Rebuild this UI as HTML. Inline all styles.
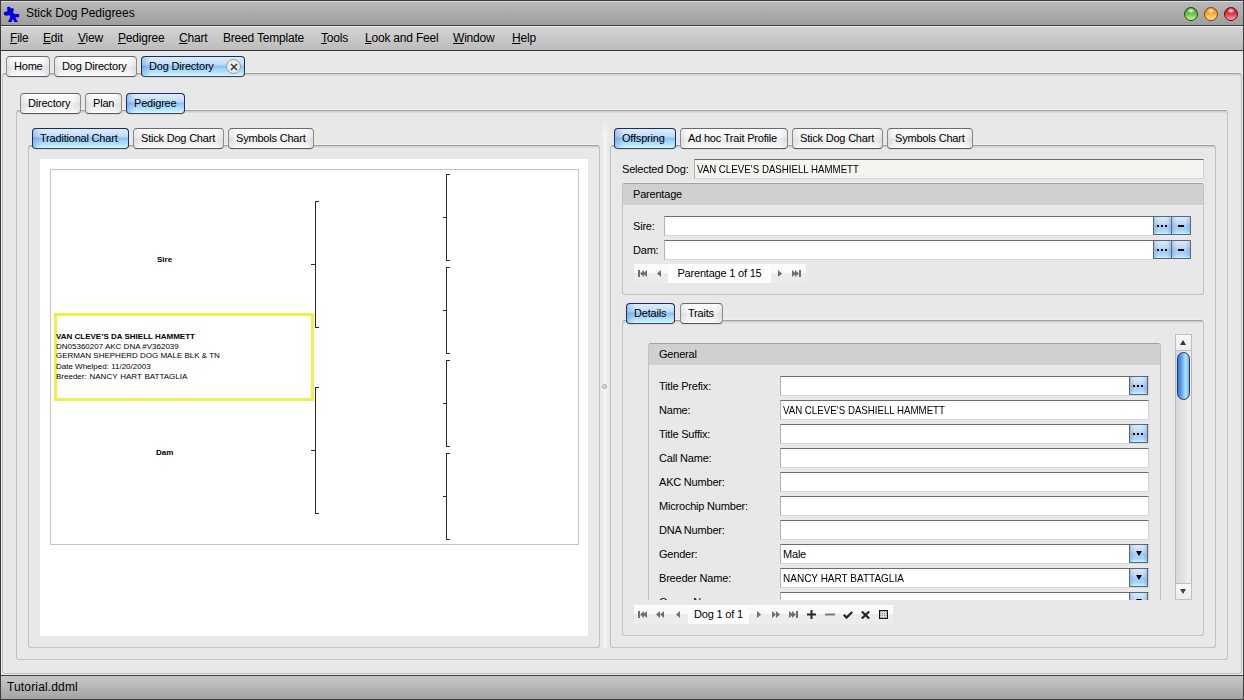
<!DOCTYPE html>
<html><head><meta charset="utf-8">
<style>
*{box-sizing:border-box;margin:0;padding:0}
html,body{width:1244px;height:700px;overflow:hidden;background:#e8e8e8;font-family:"Liberation Sans",sans-serif;color:#000;letter-spacing:-0.2px}
.a{position:absolute}
#win{position:absolute;left:0;top:0;width:1244px;height:700px;border:1px solid #3c3c3c;background:#e8e8e8}
#title{left:0;top:0;width:1244px;height:26px;border-top:1px solid #3a3a3a;border-bottom:1px solid #3e3e3e;background:linear-gradient(#dcdcdc 0,#dcdcdc 1px,#b8b8b8 1px,#9e9e9e 100%)}
#menu{left:0;top:26px;width:1244px;height:25px;border-bottom:1px solid #3a3a3a;background:linear-gradient(#ececec 0,#ececec 1px,#d4d4d4 1px,#bcbcbc 100%)}
.mi{position:absolute;top:5px;font-size:12px;line-height:14px;color:#000}
.mi u{text-decoration:underline;text-underline-offset:1px;text-decoration-thickness:1px}
.tab{position:absolute;height:21px;border:1px solid #8a8a8a;border-top-color:#6a6a6a;border-bottom-color:#5a5a5a;border-radius:4px;background:linear-gradient(90deg,rgba(0,0,0,.07) 0,rgba(0,0,0,0) 7px,rgba(0,0,0,0) calc(100% - 7px),rgba(0,0,0,.07) 100%),linear-gradient(#fdfdfd 0,#f6f6f6 40%,#ebebeb 55%,#f4f4f4 85%,#fcfcfc 100%);font-size:11px;line-height:19px;color:#000;box-shadow:0 1px 0 rgba(0,0,0,0.06)}
.tab.sel{border-color:#1e2c5c;border-bottom-color:#3a4458;background:linear-gradient(90deg,rgba(40,110,210,.28) 0,rgba(40,110,210,0) 9px),linear-gradient(#dcedfc 0,#c2defa 38%,#8cc2f2 50%,#9cd0f8 60%,#c0ecfc 90%,#d8f8ff 100%)}
.pnl{position:absolute;border:1px solid #c2c2c2;border-top-color:#a0a0a0;border-radius:3px;box-shadow:inset 0 1px 0 #cfcfcf,inset 0 2px 0 #dcdcdc,0 -1px 0 #f0f0f0}
.lbl{position:absolute;font-size:11px;line-height:13px;color:#000}
.fld{position:absolute;height:20px;background:#fff;border-top:1px solid #6c6c6c;border-left:1px solid #b4b4b4;border-right:1px solid #d0d0d0;border-bottom:1px solid #d8d8d8;font-size:11px;line-height:18px;padding-left:2px;color:#000}
.btn{position:absolute;border:1px solid #5c6878;background:linear-gradient(90deg,rgba(60,110,190,.25),transparent 25%,transparent 75%,rgba(60,110,190,.25)),linear-gradient(#dceafa 0,#c4dcf6 35%,#a4ccf2 55%,#a8d8f6 80%,#c8f0ff 100%)}
.uc{display:inline-block;letter-spacing:0;transform:scaleX(.88);transform-origin:0 0}.uc2{display:inline-block;letter-spacing:0;transform:scaleX(.91);transform-origin:0 0}
.hdr{position:absolute;height:22px;background:#d0d0d0;border-bottom:1px solid #ececec;border-radius:3px 3px 0 0;font-size:11px;line-height:20px;padding-left:10px;color:#000}

.dots{position:absolute;left:3px;top:8px;width:10px;height:2px;background:linear-gradient(90deg,#000 0,#000 2px,transparent 2px,transparent 4px,#000 4px,#000 6px,transparent 6px,transparent 8px,#000 8px,#000 10px)}
.dash{position:absolute;left:6px;top:8px;width:6px;height:2px;background:#000}
.tri{position:absolute;left:6px;top:6px;border-left:3px solid transparent;border-right:3px solid transparent;border-top:5px solid #000}
.nav{position:absolute;height:19px;background:linear-gradient(#fcfcfc 0,#fafafa 45%,#ececec 50%,#ececec 100%)}
.navtxt{position:absolute;top:0;height:19px;background:#fff;font-size:11px;line-height:19px;text-align:center;color:#000}
.sb{position:absolute;border:1px solid #b8b8b8;background:linear-gradient(90deg,#d8d8d8,#f0f0f0)}
.sbb{position:absolute;border:1px solid #c0c0c0;background:linear-gradient(#f8f8f8,#ececec)}
.tup{position:absolute;left:4px;top:5px;border-left:3.5px solid transparent;border-right:3.5px solid transparent;border-bottom:5px solid #333}
.tdn{position:absolute;left:4px;top:5px;border-left:3.5px solid transparent;border-right:3.5px solid transparent;border-top:5px solid #444}
.thumb{position:absolute;border:1px solid #1e3c78;border-radius:7px;background:linear-gradient(90deg,#3474cc 0,#68a8ee 35%,#b4e4fe 70%,#70b0ec 100%)}

.bk{position:absolute;background:#2a2a2a}
.ct{position:absolute;font-size:8px;line-height:10px;white-space:pre;color:#000;letter-spacing:0;word-spacing:0}
.ct.b{font-weight:bold}
</style></head><body>
<div id="win">
</div>
<div id="title" class="a">
  <svg class="a" style="left:0;top:0" width="24" height="24" viewBox="0 0 24 24">
    <path d="M7 6.2 L9.8 5.6 L10.8 7.4 L12 7 L14 8 L13.6 10 L12.8 11.3 L14.6 13 L19.1 13 L19.1 16.3 L15.3 16.4 L18 20.9 L14.5 20.9 L12.8 18 L11.5 20.9 L8 20.9 L10.2 16.2 L9.8 14.2 L6 14.8 L3.9 13.8 L3.9 11.3 L7.4 10.3 L7.3 8.5 Z" fill="#0000e6"/>
  </svg>
  <div class="a" style="left:26px;top:5px;font-size:12px;line-height:15px;color:#000;letter-spacing:0">Stick Dog Pedigrees</div>
  <div class="a" style="left:1184px;top:6px;width:14px;height:14px;border-radius:50%;border:1px solid #1c4a12;background:radial-gradient(ellipse 4px 3px at 50% 22%,rgba(255,255,255,.95),rgba(255,255,255,0) 100%),linear-gradient(#3e9424,#6cc444 50%,#c4f4a0)"></div>
  <div class="a" style="left:1204px;top:6px;width:14px;height:14px;border-radius:50%;border:1px solid #8a4008;background:radial-gradient(ellipse 4px 3px at 50% 22%,rgba(255,255,255,.95),rgba(255,255,255,0) 100%),linear-gradient(#e07a10,#f8b030 50%,#ffe890)"></div>
  <div class="a" style="left:1224px;top:6px;width:14px;height:14px;border-radius:50%;border:1px solid #6a0810;background:radial-gradient(ellipse 4px 3px at 50% 22%,rgba(255,255,255,.95),rgba(255,255,255,0) 100%),linear-gradient(#b81020,#e03848 50%,#ffa8b0)"></div>
</div>
<div id="menu" class="a">
  <div class="mi" style="left:10px"><u>F</u>ile</div>
  <div class="mi" style="left:43px"><u>E</u>dit</div>
  <div class="mi" style="left:78px"><u>V</u>iew</div>
  <div class="mi" style="left:118px"><u>P</u>edigree</div>
  <div class="mi" style="left:179px"><u>C</u>hart</div>
  <div class="mi" style="left:223px">Breed Template</div>
  <div class="mi" style="left:321px"><u>T</u>ools</div>
  <div class="mi" style="left:365px"><u>L</u>ook and Feel</div>
  <div class="mi" style="left:453px"><u>W</u>indow</div>
  <div class="mi" style="left:512px"><u>H</u>elp</div>
</div>

<!-- panel 1 -->
<div class="pnl" style="left:2px;top:73px;width:1240px;height:601px"></div>
<div class="tab" style="left:6px;top:56px;width:44px;padding-left:7px">Home</div>
<div class="tab" style="left:54px;top:56px;width:83px;padding-left:7px">Dog Directory</div>
<div class="tab sel" style="left:141px;top:56px;width:104px;padding-left:7px">Dog Directory</div>
<div class="a" style="left:226px;top:59px;width:15px;height:15px;border-radius:50%;border:1px solid #9a9a9a;background:radial-gradient(circle at 50% 40%,#f6f6f6,#e0e0e0)"><svg class="a" style="left:3px;top:3px" width="8" height="8" viewBox="0 0 8 8"><path d="M1 1L7 7M7 1L1 7" stroke="#404040" stroke-width="1.7"/></svg></div>

<!-- panel 2 -->
<div class="pnl" style="left:16px;top:110px;width:1212px;height:550px"></div>
<div class="tab" style="left:20px;top:93px;width:61px;padding-left:7px">Directory</div>
<div class="tab" style="left:85px;top:93px;width:37px;padding-left:7px">Plan</div>
<div class="tab sel" style="left:126px;top:93px;width:59px;padding-left:7px">Pedigree</div>

<!-- left chart panel -->
<div class="pnl" style="left:28px;top:145px;width:572px;height:503px"></div>
<div class="tab sel" style="left:32px;top:128px;width:97px;padding-left:7px">Traditional Chart</div>
<div class="tab" style="left:133px;top:128px;width:91px;padding-left:7px">Stick Dog Chart</div>
<div class="tab" style="left:228px;top:128px;width:86px;padding-left:7px">Symbols Chart</div>
<div class="a" style="left:40px;top:159px;width:548px;height:477px;background:#fff"></div>
<div class="a" style="left:50px;top:169px;width:529px;height:376px;border:1px solid #c4c4c4"></div>

<div class="bk" style="left:315px;top:201px;width:1px;height:127px"></div>
<div class="bk" style="left:315px;top:201px;width:4px;height:1px"></div>
<div class="bk" style="left:315px;top:327px;width:4px;height:1px"></div>
<div class="bk" style="left:311px;top:264px;width:4px;height:1px"></div>
<div class="bk" style="left:315px;top:387px;width:1px;height:127px"></div>
<div class="bk" style="left:315px;top:387px;width:4px;height:1px"></div>
<div class="bk" style="left:315px;top:513px;width:4px;height:1px"></div>
<div class="bk" style="left:311px;top:450px;width:4px;height:1px"></div>
<div class="bk" style="left:446px;top:174px;width:1px;height:87px"></div>
<div class="bk" style="left:446px;top:174px;width:4px;height:1px"></div>
<div class="bk" style="left:446px;top:260px;width:4px;height:1px"></div>
<div class="bk" style="left:443px;top:217px;width:3px;height:1px"></div>
<div class="bk" style="left:446px;top:267px;width:1px;height:87px"></div>
<div class="bk" style="left:446px;top:267px;width:4px;height:1px"></div>
<div class="bk" style="left:446px;top:353px;width:4px;height:1px"></div>
<div class="bk" style="left:443px;top:310px;width:3px;height:1px"></div>
<div class="bk" style="left:446px;top:360px;width:1px;height:87px"></div>
<div class="bk" style="left:446px;top:360px;width:4px;height:1px"></div>
<div class="bk" style="left:446px;top:446px;width:4px;height:1px"></div>
<div class="bk" style="left:443px;top:403px;width:3px;height:1px"></div>
<div class="bk" style="left:446px;top:453px;width:1px;height:87px"></div>
<div class="bk" style="left:446px;top:453px;width:4px;height:1px"></div>
<div class="bk" style="left:446px;top:539px;width:4px;height:1px"></div>
<div class="bk" style="left:443px;top:496px;width:3px;height:1px"></div>
<div class="ct b" style="left:157px;top:255px">Sire</div>
<div class="ct b" style="left:156px;top:448px">Dam</div>
<div class="a" style="left:54px;top:313px;width:260px;height:88px;border:3px solid #f0f048"></div>
<div class="ct b" style="left:56px;top:332px">VAN CLEVE’S DA SHIELL HAMMETT</div>
<div class="ct" style="left:56px;top:342px">DN05360207 AKC DNA #V362039</div>
<div class="ct" style="left:56px;top:351px">GERMAN SHEPHERD DOG MALE BLK &amp; TN</div>
<div class="ct" style="left:56px;top:362px">Date Whelped: 11/20/2003</div>
<div class="ct" style="left:56px;top:372px;word-spacing:0.6px">Breeder: NANCY HART BATTAGLIA</div>
<div class="a" style="left:600px;top:120px;width:10px;height:528px;background:linear-gradient(90deg,#e8e8e8 10%,#f6f6f6 50%,#e8e8e8 90%);-webkit-mask-image:linear-gradient(transparent 0,#000 14px)"></div>
<div class="a" style="left:602px;top:384px;width:5px;height:5px;border-radius:50%;border:1px solid #a8a8a8;background:#d8d8d8"></div>
<!-- right panel -->
<div class="pnl" style="left:610px;top:145px;width:606px;height:503px"></div>
<div class="tab sel" style="left:614px;top:128px;width:62px;padding-left:7px">Offspring</div>
<div class="tab" style="left:680px;top:128px;width:108px;padding-left:7px">Ad hoc Trait Profile</div>
<div class="tab" style="left:792px;top:128px;width:91px;padding-left:7px">Stick Dog Chart</div>
<div class="tab" style="left:887px;top:128px;width:86px;padding-left:7px">Symbols Chart</div>


<!-- right content -->
<div class="lbl" style="left:622px;top:163px">Selected Dog:</div>
<div class="fld" style="left:694px;top:159px;width:510px;background:#f5f4f0"><span class="uc">VAN CLEVE’S DASHIELL HAMMETT</span></div>
<div class="pnl" style="left:622px;top:183px;width:582px;height:112px"><div class="hdr" style="left:0;top:0;width:580px">Parentage</div></div>
<div class="lbl" style="left:633px;top:220px">Sire:</div>
<div class="fld" style="left:664px;top:216px;width:490px"></div>
<div class="btn" style="left:1153px;top:216px;width:19px;height:19px"><div class="dots"></div></div>
<div class="btn" style="left:1171px;top:216px;width:20px;height:19px"><div class="dash"></div></div>
<div class="lbl" style="left:633px;top:244px">Dam:</div>
<div class="fld" style="left:664px;top:240px;width:490px"></div>
<div class="btn" style="left:1153px;top:240px;width:19px;height:19px"><div class="dots"></div></div>
<div class="btn" style="left:1171px;top:240px;width:20px;height:19px"><div class="dash"></div></div>
<div class="nav" style="left:634px;top:264px;width:172px">
  <svg class="a" style="left:4px;top:6px" width="9" height="7" viewBox="0 0 9 7"><rect x="0" y="0" width="2" height="7" fill="#707070"/><path d="M2 3.5 L6 0 L6 7Z M5 3.5 L9 0 L9 7Z" fill="#707070"/></svg><svg class="a" style="left:23px;top:6px" width="4" height="7" viewBox="0 0 4 7"><path d="M0 3.5 L4 0 L4 7Z" fill="#707070"/></svg><svg class="a" style="left:144px;top:6px" width="4" height="7" viewBox="0 0 4 7"><path d="M4 3.5 L0 0 L0 7Z" fill="#707070"/></svg><svg class="a" style="left:158px;top:6px" width="9" height="7" viewBox="0 0 9 7"><path d="M4 3.5 L0 0 L0 7Z M7 3.5 L3 0 L3 7Z" fill="#707070"/><rect x="7" y="0" width="2" height="7" fill="#707070"/></svg>
  <div class="navtxt" style="left:34px;width:103px">Parentage 1 of 15</div>
</div>

<div class="pnl" style="left:622px;top:320px;width:582px;height:316px"></div>
<div class="tab sel" style="left:626px;top:303px;width:49px;padding-left:7px">Details</div>
<div class="tab" style="left:680px;top:303px;width:43px;padding-left:7px">Traits</div>

<div class="a" style="left:648px;top:343px;width:513px;height:257px;overflow:hidden">
 <div class="pnl" style="left:0;top:0;width:513px;height:300px"><div class="hdr" style="left:0;top:0;width:511px">General</div></div>
 <div class="lbl" style="left:11px;top:37px">Title Prefix:</div>
<div class="fld" style="left:132px;top:33px;width:369px"></div>
<div class="btn" style="left:481px;top:33px;width:19px;height:19px"><div class="dots"></div></div>
<div class="lbl" style="left:11px;top:61px">Name:</div>
<div class="fld" style="left:132px;top:57px;width:369px"><span class="uc">VAN CLEVE’S DASHIELL HAMMETT</span></div>
<div class="lbl" style="left:11px;top:85px">Title Suffix:</div>
<div class="fld" style="left:132px;top:81px;width:369px"></div>
<div class="btn" style="left:481px;top:81px;width:19px;height:19px"><div class="dots"></div></div>
<div class="lbl" style="left:11px;top:109px">Call Name:</div>
<div class="fld" style="left:132px;top:105px;width:369px"></div>
<div class="lbl" style="left:11px;top:133px">AKC Number:</div>
<div class="fld" style="left:132px;top:129px;width:369px"></div>
<div class="lbl" style="left:11px;top:157px">Microchip Number:</div>
<div class="fld" style="left:132px;top:153px;width:369px"></div>
<div class="lbl" style="left:11px;top:181px">DNA Number:</div>
<div class="fld" style="left:132px;top:177px;width:369px"></div>
<div class="lbl" style="left:11px;top:205px">Gender:</div>
<div class="fld" style="left:132px;top:201px;width:369px">Male</div>
<div class="btn" style="left:481px;top:201px;width:19px;height:19px"><div class="tri"></div></div>
<div class="lbl" style="left:11px;top:229px">Breeder Name:</div>
<div class="fld" style="left:132px;top:225px;width:369px"><span class="uc2">NANCY HART BATTAGLIA</span></div>
<div class="btn" style="left:481px;top:225px;width:19px;height:19px"><div class="tri"></div></div>
<div class="lbl" style="left:11px;top:253px">Owner Name:</div>
<div class="fld" style="left:132px;top:249px;width:369px"></div>
<div class="btn" style="left:481px;top:249px;width:19px;height:19px"><div class="tri"></div></div>
</div>
<div class="sb" style="left:1175px;top:334px;width:17px;height:266px">
 <div class="sbb" style="left:-1px;top:-1px;width:17px;height:17px"><div class="tup"></div></div>
 <div class="thumb" style="left:1px;top:17px;width:13px;height:48px"></div>
 <div class="sbb" style="left:-1px;top:248px;width:17px;height:17px"><div class="tdn"></div></div>
</div>
<div class="nav" style="left:634px;top:605px;width:259px">
  <svg class="a" style="left:4px;top:6px" width="9" height="7" viewBox="0 0 9 7"><rect x="0" y="0" width="2" height="7" fill="#707070"/><path d="M2 3.5 L6 0 L6 7Z M5 3.5 L9 0 L9 7Z" fill="#707070"/></svg><svg class="a" style="left:22px;top:6px" width="8" height="7" viewBox="0 0 8 7"><path d="M0 3.5 L4 0 L4 7Z M4 3.5 L8 0 L8 7Z" fill="#707070"/></svg><svg class="a" style="left:42px;top:6px" width="4" height="7" viewBox="0 0 4 7"><path d="M0 3.5 L4 0 L4 7Z" fill="#707070"/></svg><svg class="a" style="left:123px;top:6px" width="4" height="7" viewBox="0 0 4 7"><path d="M4 3.5 L0 0 L0 7Z" fill="#707070"/></svg><svg class="a" style="left:138px;top:6px" width="8" height="7" viewBox="0 0 8 7"><path d="M4 3.5 L0 0 L0 7Z M8 3.5 L4 0 L4 7Z" fill="#707070"/></svg><svg class="a" style="left:155px;top:6px" width="9" height="7" viewBox="0 0 9 7"><path d="M4 3.5 L0 0 L0 7Z M7 3.5 L3 0 L3 7Z" fill="#707070"/><rect x="7" y="0" width="2" height="7" fill="#707070"/></svg><svg class="a" style="left:173px;top:5px" width="9" height="9" viewBox="0 0 9 9"><path d="M3.5 0h2v9h-2z M0 3.5h9v2h-9z" fill="#262626"/></svg><svg class="a" style="left:191px;top:5px" width="10" height="9" viewBox="0 0 10 9"><rect x="0" y="3.5" width="10" height="2" fill="#7a7a7a"/></svg><svg class="a" style="left:209px;top:6px" width="10" height="8" viewBox="0 0 10 8"><path d="M0.8 3.8 L3.6 6.6 L9.2 1" stroke="#262626" stroke-width="2.2" fill="none"/></svg><svg class="a" style="left:227px;top:6px" width="9" height="8" viewBox="0 0 9 8"><path d="M0.8 0.5 L8.2 7.5 M8.2 0.5 L0.8 7.5" stroke="#262626" stroke-width="2.2" fill="none"/></svg><svg class="a" style="left:245px;top:5px" width="9" height="9" viewBox="0 0 9 9"><rect x="0.5" y="0.5" width="8" height="8" fill="#9a9a9a" stroke="#111"/><path d="M2.5 1v7 M4.5 1v7 M6.5 1v7 M1 2.5h7 M1 4.5h7 M1 6.5h7" stroke="#e8e8e8" stroke-width="0.7"/></svg>
  <div class="navtxt" style="left:54px;width:61px">Dog 1 of 1</div>
</div>

<!-- status -->
<div class="a" style="left:0;top:675px;width:1244px;height:25px;border-top:1px solid #404040;border-bottom:1px solid #3a3a3a;background:linear-gradient(#c8c8c8,#a4a4a4)">
  <div class="a" style="left:7px;top:4px;font-size:12px;line-height:15px;color:#000;letter-spacing:0.15px">Tutorial.ddml</div>
</div>
<div class="a" style="left:0;top:0;width:1px;height:700px;background:#3c3c3c"></div>
<div class="a" style="left:1243px;top:0;width:1px;height:700px;background:#3c3c3c"></div>
</body></html>
